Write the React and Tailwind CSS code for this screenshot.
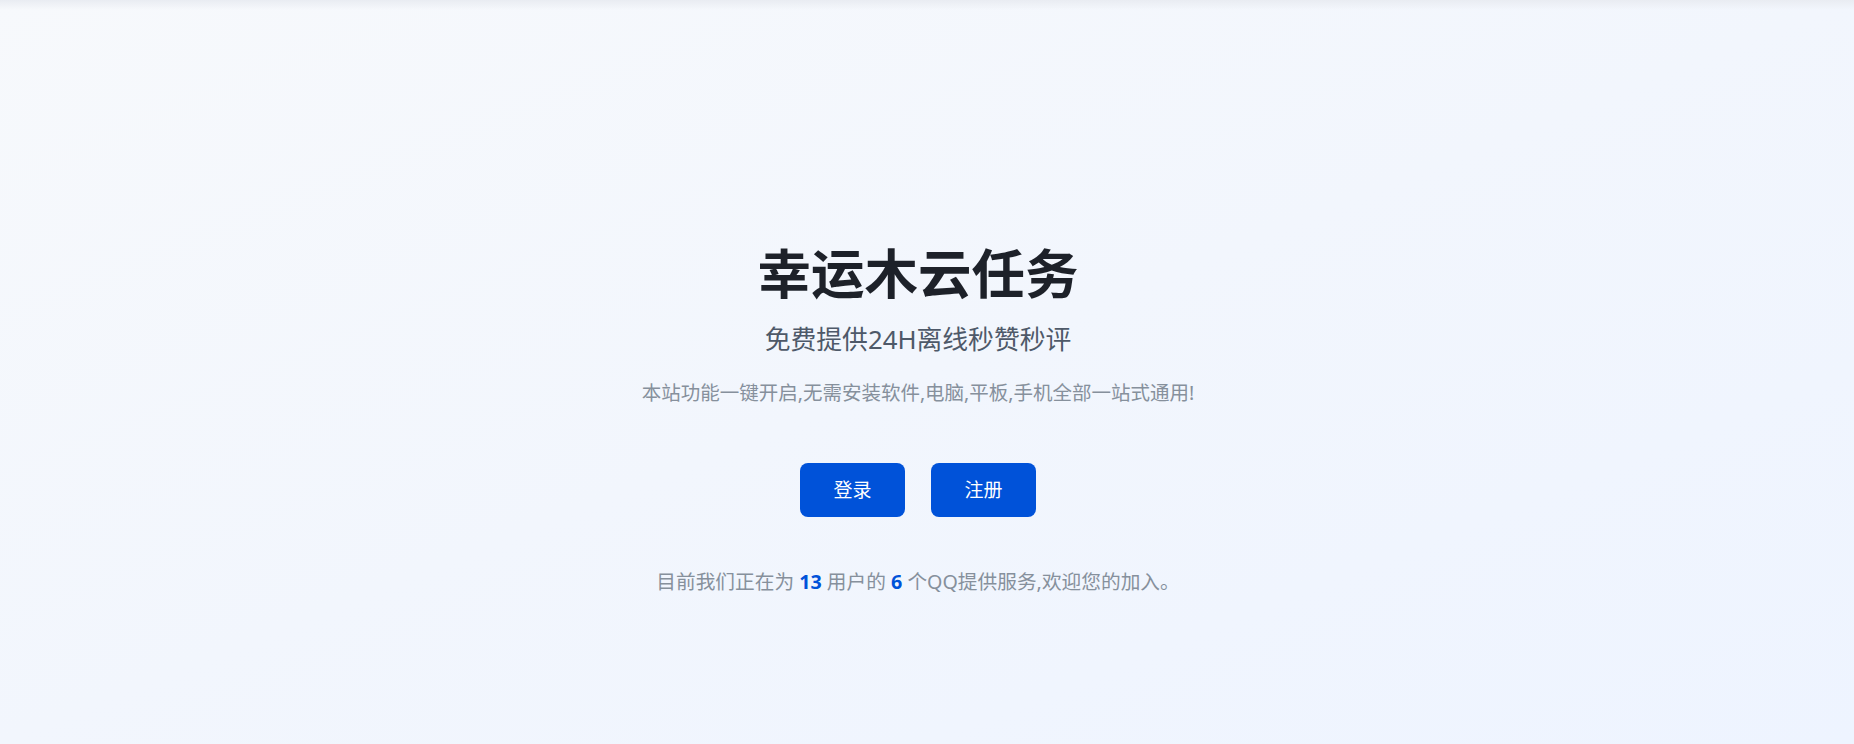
import React from 'react';

const FONT = {
  fontFamily: '"Noto Sans", "Noto Sans CJK SC", sans-serif',
};

export default function App() {
  return (
    <div
      className="relative h-[744px] w-full overflow-hidden bg-gradient-to-br from-[#f7f9fc] via-[#f2f6fd] to-[#eef4ff]"
      style={FONT}
    >
      {/* faint top shadow under the browser edge */}
      <div className="h-[10px] bg-gradient-to-b from-[#e9ecf2] to-transparent" />

      <div className="flex flex-col items-center pt-[232px] pr-[18px] text-center">
        <h1 className="text-[53.5px] font-bold leading-[64px] text-[#1d2129]">
          幸运木云任务
        </h1>
        <p className="mt-[15px] text-[25.8px] leading-[36px] text-[#4e5969]">
          免费提供24H离线秒赞秒评
        </p>
        <p className="mt-[21px] text-[19.5px] leading-[29px] text-[#86909c]">
          本站功能一键开启,无需安装软件,电脑,平板,手机全部一站式通用!
        </p>

        <div className="mt-[56px] flex gap-[26px]">
          <button className="h-[54px] w-[105px] rounded-lg bg-[#0052d9] text-[19px] text-white">
            登录
          </button>
          <button className="h-[54px] w-[105px] rounded-lg bg-[#0052d9] text-[19px] text-white">
            注册
          </button>
        </div>

        <p className="mt-[50px] text-[19.7px] leading-[29px] text-[#86909c]">
          目前我们正在为 <span className="font-bold text-[#0052d9]">13</span> 用户的{' '}
          <span className="font-bold text-[#0052d9]">6</span> 个QQ提供服务,欢迎您的加入。
        </p>
      </div>
    </div>
  );
}
